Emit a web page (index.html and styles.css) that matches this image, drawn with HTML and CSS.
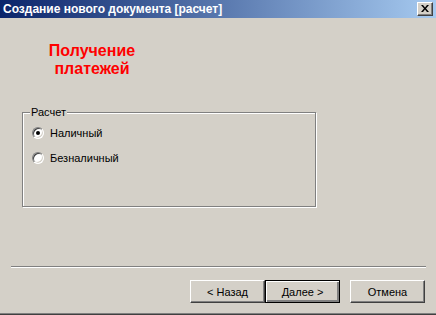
FILE: index.html
```html
<!DOCTYPE html>
<html lang="ru">
<head>
    <meta charset="utf-8" />
    <title>Создание нового документа [расчет]</title>
    <link rel="stylesheet" href="styles.css">
</head>
<body>
    <div class="window">
        <div class="titlebar">
            <span class="title">Создание нового документа [расчет]</span>
            <span class="close_btn">
                <svg width="8" height="7" viewBox="0 0 8 7">
                    <path d="M0 0h2l2 2.5L6 0h2L5 3.5 8 7H6L4 4.5 2 7H0l3-3.5z" fill="#000" />
                </svg>
            </span>
        </div>
        <div class="content">
            <div class="heading">Получение<br />платежей</div>

            <fieldset class="group">
                <legend>Расчет</legend>
                <label class="radio_row">
                    <span class="radio checked"></span>Наличный
                </label>
                <label class="radio_row">
                    <span class="radio"></span>Безналичный
                </label>
            </fieldset>

            <div class="separator"></div>

            <div class="buttons">
                <button class="btn">&lt; Назад</button>
                <button class="btn default">Далее &gt;</button>
                <button class="btn cancel">Отмена</button>
            </div>
        </div>
    </div>
</body>
</html>
```

FILE: styles.css
```css
body {
    margin: 0;
    font: 11px "Liberation Sans", Arial, sans-serif;
    color: #000;
    background-color: #d4d0c8;
}

.window {
    width: 436px;
    height: 315px;
    box-sizing: border-box;
    border-bottom: 1px solid #404040;
    box-shadow: inset 0 -1px 0 #808080;
    display: flex;
    flex-direction: column;
}

.titlebar {
    height: 18px;
    display: flex;
    align-items: center;
    justify-content: space-between;
    padding: 0 3px 0 3px;
    background: linear-gradient(to right, #0a246a, #a6caf0);
    color: #fff;
    font-weight: bold;
    font-size: 12px;
}

.close_btn {
    width: 16px;
    height: 14px;
    box-sizing: border-box;
    background-color: #d4d0c8;
    border: 1px solid;
    border-color: #fff #404040 #404040 #fff;
    box-shadow: inset -1px -1px 0 #808080;
    display: flex;
    align-items: center;
    justify-content: center;
    padding-bottom: 1px;
}

.content {
    flex: 1;
    display: flex;
    flex-direction: column;
}

.heading {
    width: 184px;
    margin-top: 24px;
    text-align: center;
    color: #ff0000;
    font-weight: bold;
    font-size: 16px;
    line-height: 18px;
}

.group {
    margin: 28px 0 0 22px;
    width: 294px;
    height: 101px;
    box-sizing: border-box;
    padding: 7px 0 0 9px;
    border: 1px solid #808080;
    box-shadow: 1px 1px 0 #fff, inset 1px 1px 0 #fff;
    min-width: 0;
}

.group legend {
    padding: 0 1px;
    margin-left: -2px;
    background-color: #d4d0c8;
    line-height: 13px;
}

.radio_row {
    display: flex;
    align-items: center;
    height: 13px;
    margin-bottom: 12px;
}

.radio {
    width: 12px;
    height: 12px;
    box-sizing: border-box;
    border-radius: 50%;
    background-color: #fff;
    border: 1px solid;
    border-color: #808080 #fff #fff #808080;
    box-shadow: inset 1px 1px 0 #404040, inset -1px -1px 0 #d4d0c8;
    margin-right: 6px;
    display: flex;
    align-items: center;
    justify-content: center;
}

.radio.checked::after {
    content: "";
    width: 4px;
    height: 4px;
    border-radius: 50%;
    background-color: #000;
}

.separator {
    margin: 59px 10px 0 11px;
    height: 1px;
    background-color: #808080;
    border-bottom: 1px solid #fff;
}

.buttons {
    display: flex;
    justify-content: flex-end;
    margin: 12px 11px 0 0;
}

.btn {
    width: 75px;
    height: 23px;
    box-sizing: border-box;
    padding: 0;
    font: inherit;
    color: #000;
    background-color: #d4d0c8;
    border: 1px solid;
    border-color: #fff #404040 #404040 #fff;
    box-shadow: inset -1px -1px 0 #808080;
    border-radius: 0;
}

.btn.default {
    border: 1px solid #000;
    box-shadow: inset 1px 1px 0 #fff, inset -2px -2px 0 #808080, inset -1px -1px 0 #404040;
}

.btn.cancel {
    margin-left: 10px;
}
```
